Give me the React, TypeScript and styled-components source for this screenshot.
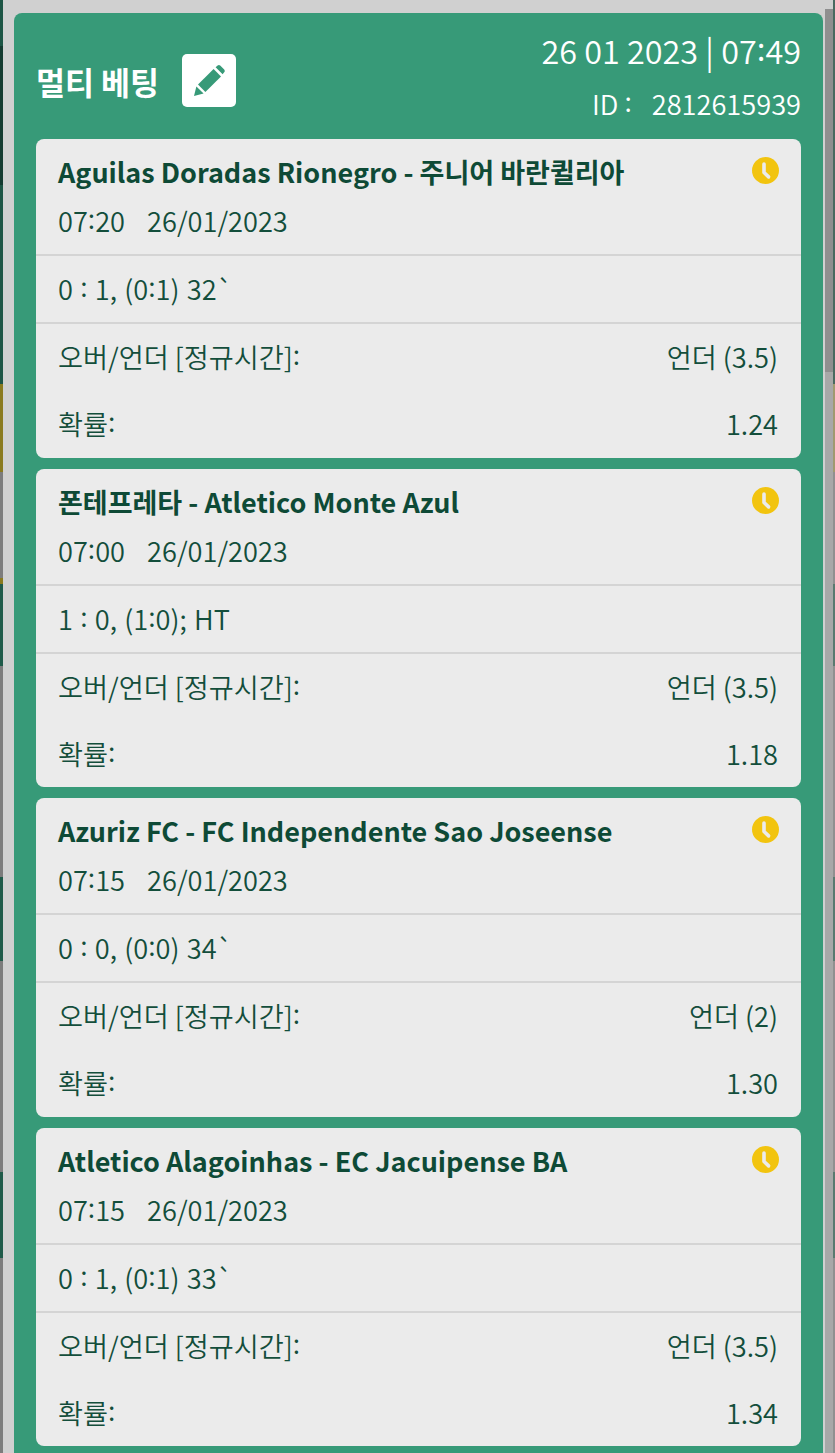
import styled, { createGlobalStyle } from 'styled-components';

const GlobalStyle = createGlobalStyle`
  html, body {
    margin: 0;
    padding: 0;
    background: #d0d0d0;
  }
  body {
    font-family: "Noto Sans CJK KR", "Noto Sans", sans-serif;
  }
`;

const Page = styled.div`
  width: 835px;
  height: 1453px;
  overflow: hidden;
  display: flex;
  background: #d0d0d0;
`;

// what shows of the dimmed page behind the dialog
const LeftEdge = styled.div`
  flex: none;
  width: 3px;
  margin-right: 11px;
  background: linear-gradient(
    to bottom,
    #1d5545 0 46px,
    #143b30 46px 185px,
    #1d5545 185px 384px,
    #8a7a1e 384px 472px,
    #7c7c7c 472px 578px,
    #8a7a1e 578px 584px,
    #1f5a49 584px 666px,
    #7c7c7c 666px 877px,
    #1f5a49 877px 961px,
    #7c7c7c 961px 1172px,
    #1f5a49 1172px 1258px,
    #7c7c7c 1258px
  );
`;

const RightEdge = styled.div`
  flex: none;
  width: 2px;
  background: linear-gradient(
    to bottom,
    #4a6a60 0 384px,
    #a09a70 384px 472px,
    #909090 472px 584px,
    #5a7a70 584px 666px,
    #909090 666px 877px,
    #5a7a70 877px 961px,
    #909090 961px 1172px,
    #5a7a70 1172px 1258px,
    #909090 1258px
  );
`;

const Scrollbar = styled.div`
  flex: none;
  width: 8px;
  margin-left: 2px;
  background: linear-gradient(to bottom, #d0d0d0 0 9px, #8f8f8f 9px 372px, #a8a8a8 372px);
`;

const Panel = styled.div`
  flex: none;
  width: 809px;
  margin-top: 13px;
  background: #379a78;
  border-radius: 8px 8px 0 0;
  padding: 0 22px;
  box-sizing: border-box;
`;

const Header = styled.div`
  display: flex;
  justify-content: space-between;
  height: 126px;
`;

const TitleRow = styled.div`
  display: flex;
  align-items: center;
  gap: 23px;
  height: 135px;
  align-self: flex-start;
`;

const Title = styled.div`
  color: #fff;
  font-size: 31.5px;
  font-weight: 700;
`;

const EditButton = styled.div`
  width: 54px;
  height: 53px;
  background: #fff;
  border-radius: 5px;
  display: flex;
  align-items: center;
  justify-content: center;
`;

const HeaderInfo = styled.div`
  text-align: right;
  color: #fff;
  font-weight: 350;
`;

const DateLine = styled.div`
  font-size: 32.4px;
  line-height: 40px;
  margin-top: 17px;
`;

const IdLine = styled.div`
  font-size: 27.2px;
  line-height: 34px;
  margin-top: 16px;
  display: flex;
  justify-content: flex-end;
  gap: 20px;
`;

const CardList = styled.div`
  display: flex;
  flex-direction: column;
  gap: 11px;
`;

const Card = styled.div`
  background: #ebebeb;
  border-radius: 8px;
  color: #134e3b;
  height: 318.5px;
  display: flex;
  flex-direction: column;
  font-size: 27.2px;
  font-weight: 350;
`;

const CardTop = styled.div`
  position: relative;
  height: 117px;
  padding: 13px 22px 0;
  box-sizing: border-box;
  border-bottom: 2px solid #d4d4d4;
`;

const Teams = styled.div`
  font-size: 27px;
  font-weight: 700;
  line-height: 40px;
  color: #0e4a36;
`;

const KickOff = styled.div`
  line-height: 36px;
  margin-top: 10px;
  display: flex;
  gap: 22px;
`;

const ClockBadge = styled.div`
  position: absolute;
  top: 18px;
  right: 22px;
  display: flex;
`;

const ScoreRow = styled.div`
  height: 68px;
  padding: 0 22px 2px;
  box-sizing: border-box;
  display: flex;
  align-items: center;
  white-space: pre;
  word-spacing: 1.2px;
  border-bottom: 2px solid #d4d4d4;
`;

const Bet = styled.div`
  padding: 0 23px 0 22px;
`;

const BetRow = styled.div`
  display: flex;
  justify-content: space-between;
  align-items: center;
  height: 66px;
  box-sizing: border-box;

  &:first-child {
    padding-bottom: 2px;
  }
`;

const RaisedColon = styled.span`
  display: inline-block;
  transform: translateY(-3px);
`;

const Clock = () => (
  <svg width="27" height="27" viewBox="0 0 27 27">
    <circle cx="13.5" cy="13.5" r="13.5" fill="#f2c40f" />
    <path d="M12 7v8.5l4.6 4.4" fill="none" stroke="#ebebeb" strokeWidth="3.6" strokeLinecap="round" strokeLinejoin="round" />
  </svg>
);

const Pencil = () => (
  <svg width="32" height="32" viewBox="0 0 32 32" fill="#379a78">
    <path d="M1 31l2.4-9.6 7.2 7.2z" />
    <path d="M5 19.6L20.6 4l7.4 7.4L12.4 27z" />
    <path d="M22.6 2.2l2-1.6a2 2 0 0 1 2.6 0l4 4a2 2 0 0 1 0 2.6l-1.6 2z" />
  </svg>
);

// the app's font draws its colons higher than ours does
const withColons = (text: string) =>
  text.split(':').map((part, i) => (
    <span key={i}>
      {i > 0 && <RaisedColon>:</RaisedColon>}
      {part}
    </span>
  ));

type Match = {
  teams: string;
  time: string;
  score: string;
  pick: string;
  odds: string;
};

const matches: Match[] = [
  { teams: 'Aguilas Doradas Rionegro - 주니어 바란퀼리아', time: '07:20', score: '0 : 1, (0:1) 32`', pick: '언더 (3.5)', odds: '1.24' },
  { teams: '폰테프레타 - Atletico Monte Azul', time: '07:00', score: '1 : 0, (1:0); HT', pick: '언더 (3.5)', odds: '1.18' },
  { teams: 'Azuriz FC - FC Independente Sao Joseense', time: '07:15', score: '0 : 0, (0:0) 34`', pick: '언더 (2)', odds: '1.30' },
  { teams: 'Atletico Alagoinhas - EC Jacuipense BA', time: '07:15', score: '0 : 1, (0:1) 33`', pick: '언더 (3.5)', odds: '1.34' },
];

const App = () => {
  return (
    <Page>
      <GlobalStyle />
      <LeftEdge />
      <Panel>
        <Header>
          <TitleRow>
            <Title>멀티 베팅</Title>
            <EditButton>
              <Pencil />
            </EditButton>
          </TitleRow>
          <HeaderInfo>
            <DateLine>{withColons('26 01 2023 | 07:49')}</DateLine>
            <IdLine>
              <span>{withColons('ID :')}</span>
              <span>2812615939</span>
            </IdLine>
          </HeaderInfo>
        </Header>
        <CardList>
          {matches.map((m) => (
            <Card key={m.teams}>
              <CardTop>
                <Teams>{m.teams}</Teams>
                <KickOff>
                  <span>{withColons(m.time)}</span>
                  <span>26/01/2023</span>
                </KickOff>
                <ClockBadge>
                  <Clock />
                </ClockBadge>
              </CardTop>
              <ScoreRow>{withColons(m.score)}</ScoreRow>
              <Bet>
                <BetRow>
                  <span>{withColons('오버/언더 [정규시간]:')}</span>
                  <span>{m.pick}</span>
                </BetRow>
                <BetRow>
                  <span>{withColons('확률:')}</span>
                  <span>{m.odds}</span>
                </BetRow>
              </Bet>
            </Card>
          ))}
        </CardList>
      </Panel>
      <Scrollbar />
      <RightEdge />
    </Page>
  );
};

export default App;
